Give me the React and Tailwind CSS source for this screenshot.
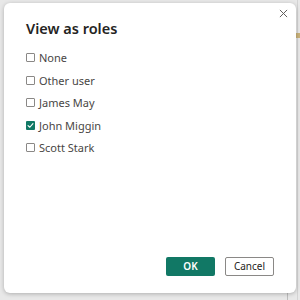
import React, { useState } from 'react';

const roles = ['None', 'Other user', 'James May', 'John Miggin', 'Scott Stark'];

function Checkbox({ checked }) {
  return checked ? (
    <span className="w-[9px] h-[9px] rounded-[1px] bg-[#117865] flex items-center justify-center">
      <svg width="7" height="7" viewBox="0 0 8 8" fill="none">
        <path d="M1.2 4.2 L3.2 6 L6.8 1.8" stroke="white" strokeWidth="1.3" strokeLinecap="round" strokeLinejoin="round" />
      </svg>
    </span>
  ) : (
    <span className="w-[9px] h-[9px] rounded-[1px] border border-[#8a8886] bg-white" />
  );
}

export default function App() {
  const [selected, setSelected] = useState('John Miggin');

  return (
    <div className="relative w-[300px] h-[300px] bg-[#e8e8e8] overflow-hidden" style={{ fontFamily: '"Noto Sans", "Open Sans", sans-serif' }}>
      {/* report canvas peeking behind the dialog */}
      <div className="absolute right-[2px] top-0 bottom-0 w-px bg-[#d4d4d4]" />
      <div className="absolute right-0 top-[33px] w-[4px] h-[5px] bg-[#c9b27a]" />
      <div className="absolute left-[287px] top-[292px] w-px h-[8px] bg-[#bdbdbd]" />

      <div className="relative ml-[4px] mt-[3px] w-[292px] h-[290px] bg-white rounded-[6px] shadow-[0_1px_4px_rgba(0,0,0,0.25)] flex flex-col">
        <div className="flex items-start justify-between pl-[22px] pr-[6px]">
          <h2 className="mt-[15px] text-[14.5px] leading-[20px] font-semibold text-[#252423]">View as roles</h2>
          <button className="mt-[3px] w-[14px] h-[14px] flex items-center justify-center text-[#605e5c]">
            <svg width="9" height="9" viewBox="0 0 10 10" fill="none">
              <path d="M1 1 L9 9 M9 1 L1 9" stroke="currentColor" strokeWidth="1.1" />
            </svg>
          </button>
        </div>

        <div className="flex flex-col pl-[22px] mt-[13px] gap-[9px]">
          {roles.map((r) => (
            <label key={r} className="flex items-center gap-[4px] h-[13.5px] cursor-pointer" onClick={() => setSelected(r)}>
              <Checkbox checked={selected === r} />
              <span className="text-[11px] leading-[13px] text-[#484644]">{r}</span>
            </label>
          ))}
        </div>

        <div className="mt-auto mb-[17px] flex justify-end gap-[10px] pr-[22px]">
          <button className="w-[49px] h-[19px] rounded-[2px] bg-[#117865] text-white text-[10px] font-semibold">OK</button>
          <button className="w-[49px] h-[19px] rounded-[2px] border border-[#8a8886] bg-white text-[#252423] text-[10px]">Cancel</button>
        </div>
      </div>
    </div>
  );
}
